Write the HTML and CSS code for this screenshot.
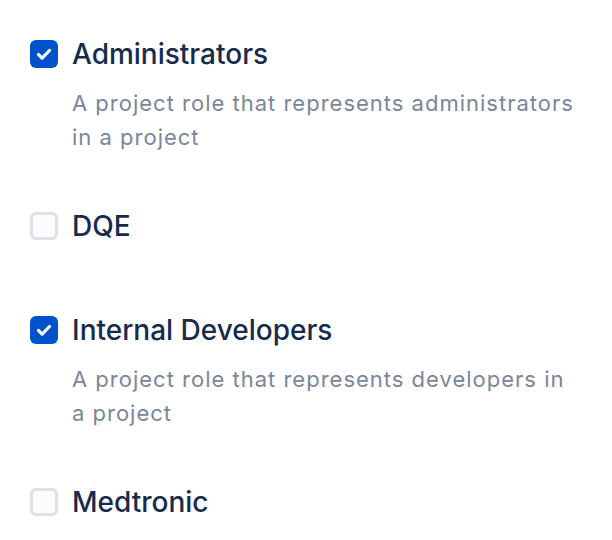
FILE: index.html
```html
<!DOCTYPE html>
<html>
<head>
<meta charset="utf-8">
<link rel="stylesheet" href="styles.css">
</head>
<body>
<div class="list">
  <div class="item with-desc">
    <span class="box checked"><svg viewBox="0 0 28 28" width="28" height="28"><path d="M8.5 14.5l3.6 3.6 7.4-7.6" fill="none" stroke="#fff" stroke-width="3.2" stroke-linecap="round" stroke-linejoin="round"/></svg></span>
    <div class="text">
      <div class="title">Administrators</div>
      <div class="desc">A project role that represents administrators in a project</div>
    </div>
  </div>
  <div class="item">
    <span class="box"></span>
    <div class="text">
      <div class="title">DQE</div>
    </div>
  </div>
  <div class="item with-desc">
    <span class="box checked"><svg viewBox="0 0 28 28" width="28" height="28"><path d="M8.5 14.5l3.6 3.6 7.4-7.6" fill="none" stroke="#fff" stroke-width="3.2" stroke-linecap="round" stroke-linejoin="round"/></svg></span>
    <div class="text">
      <div class="title">Internal Developers</div>
      <div class="desc">A project role that represents developers in a project</div>
    </div>
  </div>
  <div class="item">
    <span class="box"></span>
    <div class="text">
      <div class="title">Medtronic</div>
    </div>
  </div>
</div>
</body>
</html>
```
FILE: styles.css
```css
html, body {
  margin: 0;
  padding: 0;
  background: #ffffff;
}
body {
  font-family: Inter, "Noto Sans", sans-serif;
  -webkit-font-smoothing: antialiased;
}
.list {
  display: flex;
  flex-direction: column;
  padding: 34px 30px 0 30px;
  width: 546px;
}
.item {
  display: flex;
  align-items: flex-start;
  gap: 14px;
  margin-bottom: 64px;
}
.item.with-desc {
  margin-bottom: 52px;
}
.item:last-child {
  margin-bottom: 0;
}
.box {
  flex: none;
  width: 28px;
  height: 28px;
  margin-top: 6px;
  box-sizing: border-box;
  border-radius: 6px;
  border: 3px solid #dfe1e6;
  background: #fafbfc;
  display: flex;
}
.box.checked {
  border: none;
  background: #0052cc;
}
.text {
  flex: 1;
  min-width: 0;
}
.title {
  font-size: 28px;
  line-height: 40px;
  font-weight: 500;
  color: #172b4d;
}
.desc {
  margin-top: 12px;
  font-size: 22px;
  line-height: 34px;
  letter-spacing: 1px;
  color: #7a869a;
}
```
